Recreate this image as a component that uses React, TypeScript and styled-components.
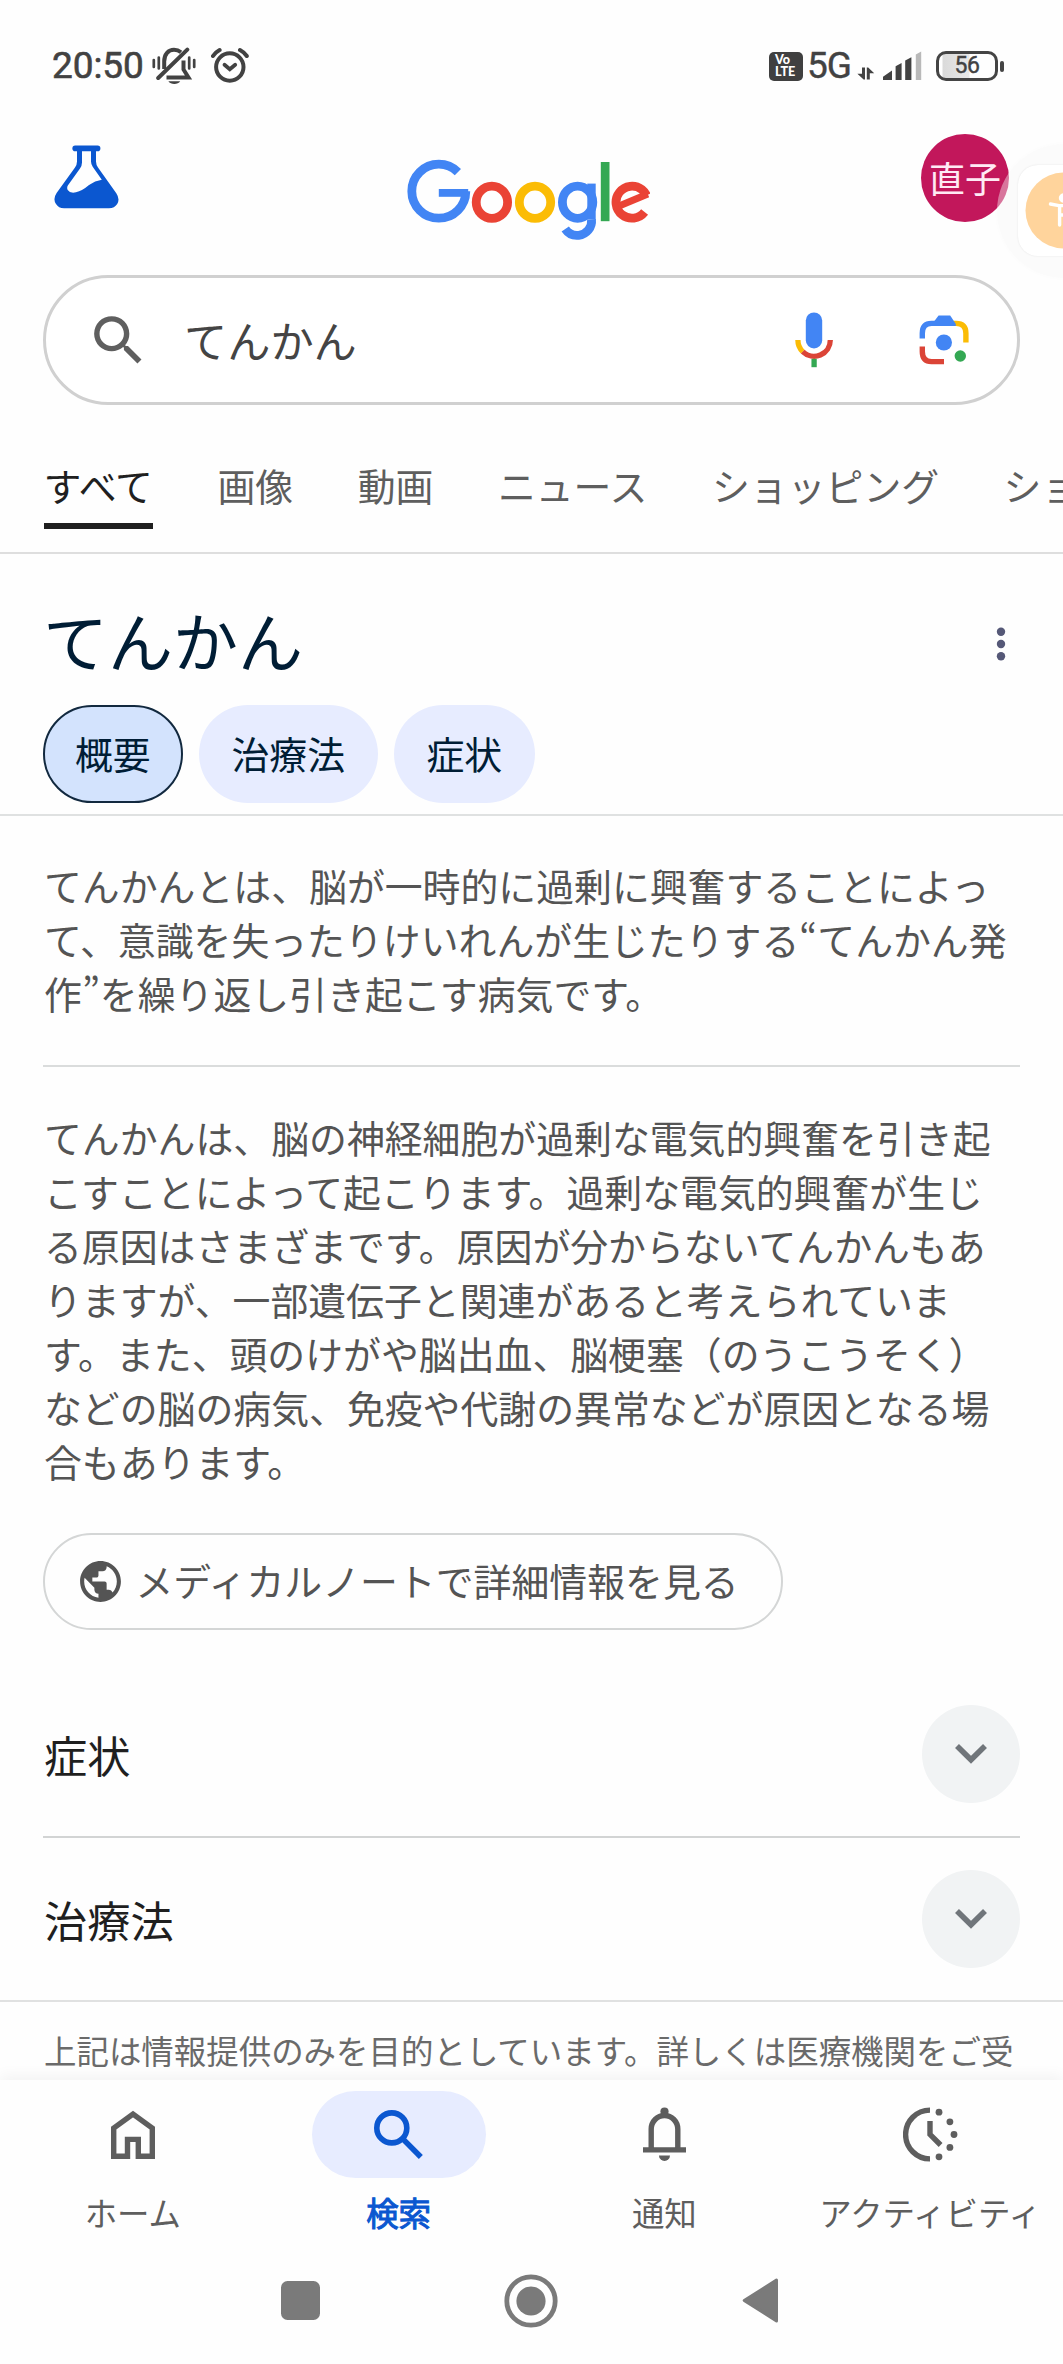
import React from "react";
import styled, { createGlobalStyle } from "styled-components";
import { MdPublic, MdSearch } from "react-icons/md";

const jp = `"Noto Sans CJK JP", "Noto Sans", sans-serif`;
const latin = `Roboto, "Noto Sans CJK JP", sans-serif`;

const GlobalStyle = createGlobalStyle`
  * { box-sizing: border-box; }
  body { margin: 0; background: #fefefe; font-family: ${jp}; overflow: hidden; }
  svg { display: block; flex: none; }
  h1, h2, p { margin: 0; font-weight: 400; }
`;

const Screen = styled.div`
  position: relative;
  display: flex;
  flex-direction: column;
  width: 1063px;
  height: 2364px;
  overflow: hidden;
  background: #fefefe;
  color: #545454;
`;

/* ---------- status bar ---------- */

const StatusBar = styled.div`
  display: flex;
  align-items: center;
  height: 88px;
  padding: 44px 59px 0 52px;
  color: #424242;
  font-family: ${latin};
`;
const Clock = styled.span`
  width: 100px;
  font-size: 37px;
  font-weight: 400;
  line-height: 44px;
  letter-spacing: -0.1px;
  -webkit-text-stroke: 0.6px #424242;
`;
const StatusRight = styled.div`
  display: flex;
  align-items: center;
  margin-left: auto;
`;
const AlarmWrap = styled.div`
  margin-left: 15px;
`;
const Volte = styled.div`
  display: flex;
  flex-direction: column;
  justify-content: center;
  width: 34px;
  height: 29px;
  padding-left: 6px;
  border-radius: 5px;
  background: #404040;
  color: #fff;
  font-family: Lato, sans-serif;
  font-weight: 900;
  font-size: 12.6px;
  line-height: 12px;
`;
const Network = styled.span`
  width: 52px;
  padding-left: 4px;
  font-size: 37px;
  font-weight: 400;
  line-height: 44px;
  letter-spacing: -1px;
  -webkit-text-stroke: 0.4px #424242;
`;
const ArrowsWrap = styled.div`
  padding: 15px 8px 0 2px;
`;
const Battery = styled.div`
  display: flex;
  align-items: center;
  margin-left: 14px;
`;
const BatteryShell = styled.div`
  display: flex;
  align-items: center;
  justify-content: center;
  width: 62px;
  height: 30px;
  border: 3px solid #444;
  border-radius: 10px;
  background: linear-gradient(90deg, transparent 3px, #dadada 4px, #e8e8e8 30px, transparent 31px);
  font-size: 23px;
  line-height: 26px;
  letter-spacing: -0.4px;
  -webkit-text-stroke: 0.4px #424242;
`;
const BatteryNub = styled.div`
  width: 4px;
  height: 11px;
  margin-left: 2px;
  border-radius: 2px;
  background: #444;
`;

/* ---------- header ---------- */

const Header = styled.header`
  display: flex;
  align-items: flex-start;
  height: 187px;
  padding: 46px 54px 0;
`;
const FlaskWrap = styled.div`
  padding-top: 11px;
`;
const LogoWrap = styled.div`
  padding: 25px 0 0 287px;
`;
const Avatar = styled.div`
  display: flex;
  align-items: center;
  justify-content: center;
  width: 88px;
  height: 88px;
  margin-left: auto;
  padding-bottom: 3px;
  border-radius: 50%;
  background: #c2175b;
  color: #ffeaf4;
  font-size: 36px;
  line-height: 52px;
`;
const Halo = styled.div`
  position: absolute;
  left: 997px;
  top: 144px;
  width: 134px;
  height: 134px;
  border-radius: 50%;
  background: rgba(248, 248, 248, 0.42);
  box-shadow: 0 0 10px rgba(0, 0, 0, 0.012);
`;
const FloatCard = styled.div`
  position: absolute;
  left: 1018px;
  top: 165px;
  width: 91px;
  height: 91px;
  padding: 7px;
  border-radius: 20px;
  background: #fff;
  box-shadow: 0 0 2px rgba(0, 0, 0, 0.1);
`;

/* ---------- search ---------- */

const SearchBox = styled.div`
  display: flex;
  align-items: center;
  height: 130px;
  margin: 0 43px;
  padding: 0 48px 0 40px;
  border: 3px solid #d0d0d0;
  border-radius: 65px;
  background: #fff;
  color: #5f5f5f;
`;
const Query = styled.span`
  margin: -3px 0 0 33px;
  color: #444;
  font-size: 43.2px;
  line-height: 60px;
`;
const SearchTools = styled.div`
  display: flex;
  align-items: center;
  gap: 85px;
  margin-left: auto;
`;

const Tabs = styled.nav`
  display: flex;
  gap: 64.5px;
  height: 149px;
  padding-left: 43.5px;
  border-bottom: 2px solid #dedede;
  overflow: hidden;
`;
const Tab = styled.span<{ $active?: boolean }>`
  flex: none;
  height: 124px;
  padding-top: 53px;
  border-bottom: 6px solid ${(p) => (p.$active ? "#1f1f1f" : "transparent")};
  color: ${(p) => (p.$active ? "#1f1f1f" : "#5e5e5e")};
  font-size: 37.87px;
  line-height: 54px;
  white-space: nowrap;
`;

/* ---------- knowledge panel ---------- */

const TitleBlock = styled.section`
  height: 262px;
  padding: 42px 43px 0;
  border-bottom: 2px solid #dfe1e1;
`;
const TitleRow = styled.div`
  display: flex;
  align-items: center;
  justify-content: space-between;
  height: 91px;
  padding-right: 14px;
`;
const MoreWrap = styled.div`
  padding-top: 5px;
`;
const Title = styled.h1`
  margin-top: -5px;
  color: #001d35;
  font-size: 65px;
  line-height: 90px;
`;
const Chips = styled.div`
  display: flex;
  gap: 16px;
  padding-top: 18px;
`;
const Chip = styled.span<{ $active?: boolean }>`
  padding: 0 ${(p) => (p.$active ? "30px" : "32.7px")};
  height: 98px;
  border: ${(p) => (p.$active ? "2px solid #12293f" : "0")};
  border-radius: 49px;
  background: ${(p) => (p.$active ? "#d3e3fd" : "#e7ecff")};
  color: #001d35;
  font-size: 37.87px;
  line-height: ${(p) => (p.$active ? "92px" : "96px")};
`;

const Summary = styled.p`
  margin: 0 43px;
  height: 251px;
  padding: 42px 0 0 1px;
  border-bottom: 2px solid #dadcdc;
  font-size: 37.87px;
  line-height: 54.1px;
`;
const Line = styled.span`
  display: block;
  white-space: nowrap;
`;
const Quote = styled.span`
  font-family: "Noto Sans CJK KR", "Noto Sans", sans-serif;
  line-height: 0;
`;
const Detail = styled.p`
  margin: 0 43px;
  padding: 42.5px 0 0 1px;
  height: 466px;
  font-size: 37.87px;
  line-height: 54.1px;
`;
const MoreButton = styled.div`
  display: flex;
  align-items: center;
  flex: none;
  width: 740px;
  height: 97px;
  margin-left: 43px;
  padding-left: 31px;
  border: 2px solid #d4d6d6;
  border-radius: 49px;
  font-size: 37.87px;
  line-height: 54px;
  white-space: nowrap;
`;
const MoreLabel = styled.span`
  margin: -4px 0 0 10.5px;
`;

const Accordion = styled.div`
  padding-top: 42px;
`;
const AccordionRow = styled.div<{ $last?: boolean }>`
  display: flex;
  align-items: center;
  justify-content: space-between;
  height: ${(p) => (p.$last ? "164px" : "166px")};
  margin: 0 ${(p) => (p.$last ? "0" : "43px")};
  padding: 0 ${(p) => (p.$last ? "43px" : "0")} 0 ${(p) => (p.$last ? "44px" : "1px")};
  border-bottom: 2px solid ${(p) => (p.$last ? "#e0e1e1" : "#d2d4d4")};
`;
const AccordionTitle = styled.h2`
  color: #1f1f1f;
  font-size: 43.2px;
  line-height: 60px;
`;
const Toggle = styled.div`
  display: flex;
  align-items: center;
  justify-content: center;
  width: 98px;
  height: 98px;
  border-radius: 50%;
  background: #f1f3f4;
`;
const Disclaimer = styled.p`
  flex: none;
  height: 78px;
  padding: 25px 0 0 44px;
  color: #6a6a6a;
  font-size: 32.46px;
  line-height: 46px;
  white-space: nowrap;
`;

/* ---------- bottom bars ---------- */

const BottomNav = styled.nav`
  position: relative;
  display: grid;
  grid-template-columns: repeat(4, 1fr);
  flex: none;
  height: 190px;
  background: #fefefe;
  box-shadow: 0 -4px 14px rgba(0, 0, 0, 0.05);
`;
const NavItem = styled.div<{ $active?: boolean }>`
  display: flex;
  flex-direction: column;
  align-items: center;
  padding-top: 11px;
  color: ${(p) => (p.$active ? "#0b57d0" : "#5e5e5e")};
  font-size: 32.46px;
  line-height: 46px;
  white-space: nowrap;
  -webkit-text-stroke: ${(p) => (p.$active ? "1px #0b57d0" : "0")};
`;
const NavPill = styled.div<{ $active?: boolean }>`
  display: flex;
  align-items: center;
  justify-content: center;
  width: 174px;
  height: 87px;
  margin-bottom: 11px;
  border-radius: 44px;
  background: ${(p) => (p.$active ? "#e7ecff" : "transparent")};
`;
const SystemNav = styled.div`
  position: relative;
  display: flex;
  align-items: center;
  justify-content: space-between;
  flex: 1;
  padding: 0 284px 33px 281px;
  background: #fefefe;
`;

/* ---------- drawings ---------- */

const BellOff = () => (
  <svg width="44" height="38" viewBox="0 0 44 38" fill="none" stroke="#424242" strokeWidth="4">
    <path d="M12.2 22V14.5C12.2 7 16.5 2.8 22 2.8C25 2.8 27 3.6 29 5.2" />
    <path d="M35.3 2.6L6.2 31" strokeLinecap="round" />
    <path d="M14.5 30.4H36.5L31.5 22.5V13.5" />
    <path d="M16.4 34.2H28.2C26 37.8 18.6 37.8 16.4 34.2Z" fill="#424242" stroke="none" />
    <path d="M1.8 13V20M6.8 10.5V21.5M37.2 10.5V21.5M42.2 13V20" strokeWidth="2.7" strokeLinecap="round" />
  </svg>
);
const Alarm = () => (
  <svg width="38" height="38" viewBox="0 0 38 38" fill="none" stroke="#424242" strokeWidth="4" strokeLinecap="round">
    <circle cx="18.8" cy="20" r="13.7" />
    <path d="M13.5 17.8L18.8 22.3L24.2 17.8" strokeWidth="3.8" />
    <path d="M2 9Q4.4 5.2 8.6 3M29 3Q33.2 5.2 35.8 9" />
  </svg>
);
const DataArrows = () => (
  <svg width="18" height="13" viewBox="0 0 18 13" fill="#424242">
    <path d="M5 .6H8V12.4H6.6L.4 6.8H5Z" />
    <path d="M12.8 12.4H9.8V.4H11.2L17.2 6.2H12.8Z" />
  </svg>
);
const Signal = () => (
  <svg width="39" height="30" viewBox="0 0 39 30" fill="#424242">
    <path d="M0 25.8L9 19.6V29H0ZM12.6 15.2L18.6 12V29H12.6ZM22.2 9.6L28.4 6.2V29H22.2Z" />
    <path d="M32.8 3.6L38.2 .4V29H32.8Z" fill="#b9b9b9" />
  </svg>
);
const Flask = () => (
  <svg width="65" height="64" viewBox="0 0 65 64">
    <rect x="18.4" y=".6" width="28" height="5.6" rx="2.8" fill="#0b57d0" />
    <path
      fill="#0b57d0"
      fillRule="evenodd"
      d="M23 4V16.5Q23 19.5 21 22.5L2.6 48Q-1.4 54 2 59Q4.5 63.2 10 63.2H55Q60.5 63.2 63.2 59Q66.2 54 62.3 48.2L44 22.5Q42 19.5 42 16.5V4ZM28 6V17.5Q28 20.5 26 23.5L14 40.3Q12.5 42.8 13.7 45Q16 48.6 22 47.3Q28 46 35 40Q41 35.8 47.8 34.8L38.7 21.7Q37 19 37 16.5V6Z"
    />
  </svg>
);
const GoogleLogo = () => (
  <svg width="244" height="82" viewBox="406 159 244 82" fill="none" strokeWidth="8.8" role="img" aria-label="Google">
    <circle cx="438.8" cy="191.2" r="27" stroke="#4285f4" pathLength="360" strokeDasharray="315 45" />
    <rect x="438.8" y="189" width="29.4" height="7.8" fill="#4285f4" />
    <ellipse cx="491.9" cy="202.2" rx="15.7" ry="16.1" stroke="#ea4335" />
    <ellipse cx="535" cy="202.2" rx="15.7" ry="16.1" stroke="#fbbc05" />
    <ellipse cx="577.6" cy="202.2" rx="15.2" ry="16.1" stroke="#4285f4" />
    <rect x="587.3" y="183.6" width="8.4" height="36" fill="#4285f4" />
    <circle cx="577.2" cy="221" r="14.4" stroke="#4285f4" pathLength="360" strokeDasharray="152 208" transform="rotate(-6 577.2 221)" />
    <rect x="600.8" y="162" width="8.7" height="59.2" fill="#34a853" />
    <circle cx="632" cy="202.2" r="16" stroke="#ea4335" pathLength="360" strokeDasharray="297 63" transform="rotate(38 632 202.2)" />
    <line x1="618.5" y1="206.2" x2="647.8" y2="193.9" stroke="#ea4335" strokeWidth="7" />
  </svg>
);
const Person = () => (
  <svg width="77" height="77" viewBox="0 0 77 77">
    <circle cx="38.5" cy="38.5" r="38" fill="#ffd49c" />
    <g fill="none" stroke="#fff" strokeWidth="3.4" strokeLinecap="round" strokeLinejoin="round">
      <circle cx="38.5" cy="26" r="3" fill="#fff" />
      <path d="M25.5 32L34 33.6H43L51.5 32M34.6 35V53M42.4 35V53M34.6 43H42.4" />
    </g>
  </svg>
);
const Mic = () => (
  <svg width="39" height="56" viewBox="0 0 39 56" fill="none" strokeWidth="5.3">
    <rect x="10.8" y=".4" width="16.4" height="36" rx="8.2" fill="#4285f4" />
    <path d="M2.9 28A16.2 16.2 0 0 0 7.7 39.6" stroke="#fbbc05" />
    <path d="M7.7 39.6A16.2 16.2 0 0 0 35.3 28" stroke="#db4437" />
    <path d="M19.1 46.8V55.2" stroke="#34a853" />
  </svg>
);
const Lens = () => (
  <svg width="50" height="50" viewBox="0 0 50 50" fill="none" strokeWidth="5.4">
    <path d="M34 8.4H37Q46.9 8.4 46.9 18.3V27.4" stroke="#fbbc05" />
    <path d="M3.3 23.5V18.3Q3.3 8.4 12.5 8.4H30" stroke="#4285f4" />
    <path d="M15.4 6L19.6 .4H31.2L36.8 9V11.1H13Z" fill="#4285f4" />
    <path d="M3.3 31.6V36.5Q3.3 46.6 12.5 46.6H25" stroke="#db4437" />
    <circle cx="24.9" cy="27.5" r="8.1" fill="#4285f4" />
    <circle cx="41.3" cy="41" r="5.7" fill="#34a853" />
  </svg>
);
const More = () => (
  <svg width="10" height="34" viewBox="0 0 10 34" fill="#555877">
    <circle cx="5" cy="4.7" r="4.2" />
    <circle cx="5" cy="17" r="4.2" />
    <circle cx="5" cy="29.3" r="4.2" />
  </svg>
);
const Chevron = () => (
  <svg width="34" height="22" viewBox="0 0 34 22" fill="none" stroke="#70757a" strokeWidth="5.6">
    <path d="M3 3L17 16.8L31 3" />
  </svg>
);
const Home = () => (
  <svg width="44" height="49" viewBox="0 0 44 49" fill="none" stroke="currentColor" strokeWidth="5.4">
    <path d="M2.7 46.2V18.2L22 4L41.3 18.2V46.2H27.3V29.4H16.5V46.2Z" />
  </svg>
);
const NavSearch = () => (
  <svg width="49" height="49" viewBox="0 0 49 49" fill="none" stroke="currentColor" strokeWidth="5.6">
    <circle cx="17.8" cy="17.9" r="15" />
    <path d="M28.3 28.4L46.8 47" />
  </svg>
);
const Bell = () => (
  <svg width="43" height="56" viewBox="0 0 43 56" fill="none" stroke="currentColor" strokeWidth="5.4">
    <circle cx="21.5" cy="4.6" r="4.1" fill="currentColor" stroke="none" />
    <path d="M8.2 42V22.1A13.3 13.6 0 0 1 34.8 22.1V42M0 42.9H43" />
    <path d="M16 48.4H27A5.5 5.5 0 0 1 16 48.4Z" fill="currentColor" stroke="none" />
  </svg>
);
const Activity = () => (
  <svg width="55" height="55" viewBox="0 0 55 55" fill="none" stroke="currentColor" strokeWidth="5.4">
    <path d="M27 3.1A24.4 24.4 0 0 0 27 51.9M27 14V27.4L37.6 38" />
    <g fill="currentColor" stroke="none">
      <circle cx="36" cy="5.2" r="3.4" />
      <circle cx="46.9" cy="14.8" r="3.4" />
      <circle cx="51" cy="27.5" r="3.4" />
      <circle cx="46.9" cy="40.4" r="3.4" />
      <circle cx="36" cy="49.8" r="3.4" />
    </g>
  </svg>
);
const Recents = () => (
  <svg width="39" height="39" viewBox="0 0 39 39">
    <rect width="39" height="39" rx="6.5" fill="#7a7a7a" />
  </svg>
);
const HomeKey = () => (
  <svg width="54" height="54" viewBox="0 0 54 54">
    <circle cx="27" cy="27" r="24.2" fill="none" stroke="#7a7a7a" strokeWidth="4.8" />
    <circle cx="27" cy="27" r="14.6" fill="#7a7a7a" />
  </svg>
);
const BackKey = () => (
  <svg width="37" height="45" viewBox="0 0 37 45">
    <path d="M2.2 22.5L34.5 2V43Z" fill="#7a7a7a" stroke="#7a7a7a" strokeWidth="3" strokeLinejoin="round" />
  </svg>
);

/* ---------- content ---------- */

const tabs = ["すべて", "画像", "動画", "ニュース", "ショッピング", "ショート動画"];
const chips = ["概要", "治療法", "症状"];
const detail = [
  "てんかんは、脳の神経細胞が過剰な電気的興奮を引き起",
  "こすことによって起こります。過剰な電気的興奮が生じ",
  "る原因はさまざまです。原因が分からないてんかんもあ",
  "りますが、一部遺伝子と関連があると考えられていま",
  "す。また、頭のけがや脳出血、脳梗塞（のうこうそく）",
  "などの脳の病気、免疫や代謝の異常などが原因となる場",
  "合もあります。",
];
const nav = [
  { label: "ホーム", icon: <Home /> },
  { label: "検索", icon: <NavSearch />, active: true },
  { label: "通知", icon: <Bell /> },
  { label: "アクティビティ", icon: <Activity /> },
];

export default function App() {
  return (
    <>
      <GlobalStyle />
      <Screen lang="ja">
        <StatusBar>
          <Clock>20:50</Clock>
          <BellOff />
          <AlarmWrap>
            <Alarm />
          </AlarmWrap>
          <StatusRight>
            <Volte>
              <span>Vo</span>
              <span>LTE</span>
            </Volte>
            <Network>5G</Network>
            <ArrowsWrap>
              <DataArrows />
            </ArrowsWrap>
            <Signal />
            <Battery>
              <BatteryShell>56</BatteryShell>
              <BatteryNub />
            </Battery>
          </StatusRight>
        </StatusBar>

        <Header>
          <FlaskWrap>
            <Flask />
          </FlaskWrap>
          <LogoWrap>
            <GoogleLogo />
          </LogoWrap>
          <Avatar>直子</Avatar>
        </Header>
        <Halo />
        <FloatCard>
          <Person />
        </FloatCard>

        <SearchBox>
          <MdSearch size={65} />
          <Query>てんかん</Query>
          <SearchTools>
            <Mic />
            <Lens />
          </SearchTools>
        </SearchBox>

        <Tabs>
          {tabs.map((t, i) => (
            <Tab key={t} $active={i === 0}>
              {t}
            </Tab>
          ))}
        </Tabs>

        <TitleBlock>
          <TitleRow>
            <Title>てんかん</Title>
            <MoreWrap>
              <More />
            </MoreWrap>
          </TitleRow>
          <Chips>
            {chips.map((c, i) => (
              <Chip key={c} $active={i === 0}>
                {c}
              </Chip>
            ))}
          </Chips>
        </TitleBlock>

        <Summary>
          <Line>てんかんとは、脳が一時的に過剰に興奮することによっ</Line>
          <Line>
            て、意識を失ったりけいれんが生じたりする<Quote lang="ko">“</Quote>てんかん発
          </Line>
          <Line>
            作<Quote lang="ko">”</Quote>を繰り返し引き起こす病気です。
          </Line>
        </Summary>

        <Detail>
          {detail.map((l) => (
            <Line key={l}>{l}</Line>
          ))}
        </Detail>

        <MoreButton>
          <MdPublic size={49} />
          <MoreLabel>メディカルノートで詳細情報を見る</MoreLabel>
        </MoreButton>

        <Accordion>
          <AccordionRow>
            <AccordionTitle>症状</AccordionTitle>
            <Toggle>
              <Chevron />
            </Toggle>
          </AccordionRow>
          <AccordionRow $last>
            <AccordionTitle>治療法</AccordionTitle>
            <Toggle>
              <Chevron />
            </Toggle>
          </AccordionRow>
        </Accordion>
        <Disclaimer>上記は情報提供のみを目的としています。詳しくは医療機関をご受</Disclaimer>

        <BottomNav>
          {nav.map((n) => (
            <NavItem key={n.label} $active={n.active}>
              <NavPill $active={n.active}>{n.icon}</NavPill>
              {n.label}
            </NavItem>
          ))}
        </BottomNav>
        <SystemNav>
          <Recents />
          <HomeKey />
          <BackKey />
        </SystemNav>
      </Screen>
    </>
  );
}
